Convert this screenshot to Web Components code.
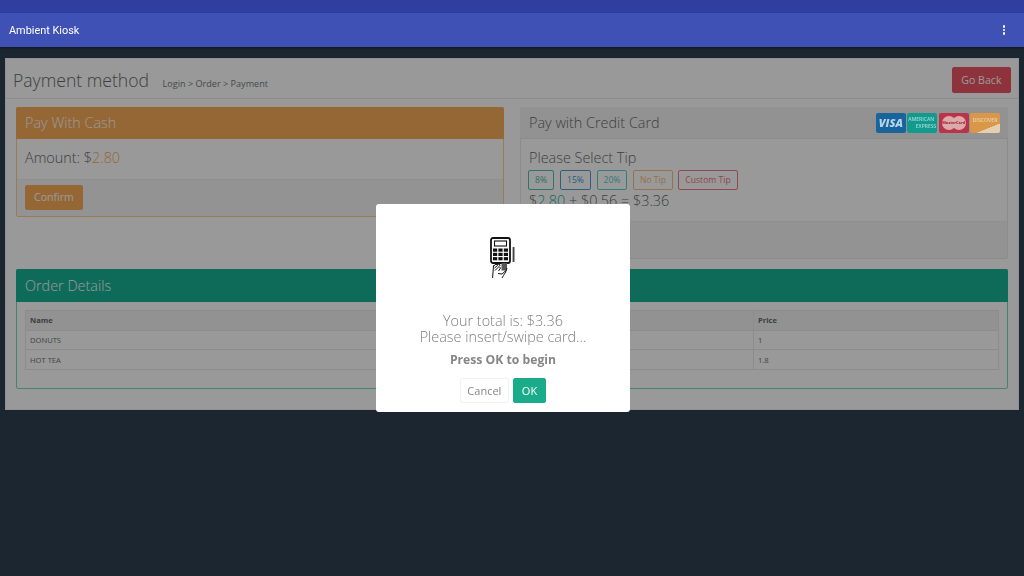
<!DOCTYPE html>
<html><head><meta charset="utf-8"><style>
html,body{margin:0;padding:0;height:100%}
body{width:1024px;height:576px;overflow:hidden;font-family:"Open Sans","Liberation Sans",sans-serif;color:#676a6c;background:#2f4050}
</style></head><body>
<kiosk-app></kiosk-app>
<script>
function def(name, html){
  customElements.define(name, class extends HTMLElement{
    constructor(){super();this.attachShadow({mode:'open'}).innerHTML=html;}
  });
}
def('app-bar',`<style>
:host{display:block;flex:none}
.status{height:13px;background:#303f9f}
.bar{height:34px;background:#3f51b5;display:flex;align-items:center;justify-content:space-between;padding:0 19px 0 9px;color:#fff;font:400 10.9px Roboto,"Open Sans",sans-serif;box-shadow:0 1px 2px rgba(0,0,0,.4);position:relative;z-index:1}
.dots{display:flex;flex-direction:column;gap:1.4px}
i{display:block;width:2.2px;height:2.2px;background:#fff;border-radius:50%}
</style><div class="status"></div><div class="bar"><span><slot></slot></span><div class="dots"><i></i><i></i><i></i></div></div>`);

def('page-head',`<style>
:host{display:flex;align-items:center;justify-content:space-between;height:40px;box-sizing:border-box;padding:2px 7px 0 7px;border-bottom:1px solid #e7eaec}
.l{display:flex;align-items:baseline;gap:13.5px;padding-top:1px}
h2{margin:0;font-weight:300;font-size:17.6px;line-height:24px;color:#676a6c}
small{font-size:9.1px;color:#777a7c}
</style><div class="l"><h2><slot name="title"></slot></h2><small><slot name="crumb"></slot></small></div><slot name="action"></slot>`);

def('ui-btn',`<style>
:host{display:inline-flex;align-items:center;justify-content:center;box-sizing:border-box;border-radius:2px;font-size:var(--fs,10.6px);border:1px solid var(--c);background:var(--c);color:#fff;height:var(--h,25px);padding:0 var(--p,8px)}
:host([plain]){background:#fff;border-color:#f2f2f2;color:#868686}
</style><slot></slot>`);

def('tip-btn',`<style>
:host{display:inline-flex;align-items:center;justify-content:center;box-sizing:border-box;height:20px;border:1px solid color-mix(in srgb,var(--c) 78%,white);color:color-mix(in srgb,var(--c) 82%,white);border-radius:2px;font-size:8.6px;background:#fff}
</style><slot></slot>`);

def('ui-card',`<style>
:host{display:block;box-sizing:border-box;border:1px solid var(--bc,#e7eaec);border-radius:2px;background:#fff}
.h{height:var(--hh,31px);margin:-1px -1px 0;padding:0 9px;display:flex;align-items:center;justify-content:space-between;background:var(--c,#f3f3f4);color:var(--ht,#fff);font-weight:300;font-size:14.4px;border-radius:2px 2px 0 0;border-bottom:1px solid var(--c,#e7eaec)}
:host([plain]) .h{color:#676a6c;padding:0 8px 0 9px;background:#f3f3f4}
.b{padding:var(--bp,9px 8px)}
.f{background:#f5f5f5;border-top:1px solid #efefef;padding:var(--fp,5px 8px);min-height:var(--fh,26px)}
:host([nofoot]) .f{display:none}
</style><div class="h"><span><slot name="head"></slot></span><slot name="tools"></slot></div><div class="b"><slot></slot></div><div class="f"><slot name="foot"></slot></div>`);

def('card-logos',`<style>
:host{display:flex;gap:1.5px;position:relative;z-index:2}
span{display:flex;align-items:center;justify-content:center;width:29.9px;height:20px;border-radius:2px;overflow:hidden;color:#fff;position:relative;line-height:1;text-align:center;white-space:nowrap}
.v{background:#17659c;font:italic 800 11px "Open Sans",sans-serif;color:#b8d4e6}
.a{background:#129a8f;font:400 5px "Open Sans",sans-serif;color:#a5dcd5;flex-direction:column;gap:1.5px}
.a b{font-weight:600;align-self:flex-start;margin-left:1px}.a b+b{align-self:flex-end;margin:0 1px 0 0}
.m{background:#b9344b;font:700 3.8px "Open Sans",sans-serif}
.m::before,.m::after{content:"";position:absolute;top:3px;width:14px;height:14px;border-radius:50%;background:#dcaaaa}
.m::before{left:3px}.m::after{right:3px}
.m b{position:relative;z-index:1;color:#a73040}
.d{background:linear-gradient(158deg,#d9974a 0 70%,#e6cfae 70.5%);font:600 5.2px "Open Sans",sans-serif;color:#ecd3ae;padding-bottom:6px;box-sizing:border-box}
</style><span class="v">VISA</span><span class="a"><b>AMERICAN</b><b>EXPRESS</b></span><span class="m"><b>MasterCard</b></span><span class="d">DISCOVER</span>`);

def('order-table',`<style>
:host{display:block}
table{width:100%;border-collapse:collapse;table-layout:fixed;font-size:7.6px;color:#707375}
td,th{border:1px solid #e9e9e9;height:19.7px;padding:0 4px;text-align:left;box-sizing:border-box}
th{background:#f3f3f4;font-weight:700;color:#676a6c}
</style><table><colgroup><col style="width:364px"><col style="width:364px"><col></colgroup>
<tr><th>Name</th><th></th><th>Price</th></tr>
<tr><td>DONUTS</td><td></td><td>1</td></tr>
<tr><td>HOT TEA</td><td></td><td>1.8</td></tr></table>`);

def('terminal-icon',`<style>:host{display:block;width:26px;height:42px}svg{display:block}</style>
<svg width="26" height="42" viewBox="0 0 26 42" fill="none" stroke="#111">
<rect x="1" y="1" width="19" height="25" rx="2" stroke-width="1.800"/>
<rect x="4.500" y="4" width="12" height="5" stroke-width="1.100"/>
<g fill="#111" stroke="none">
<rect x="3" y="11.500" width="4.200" height="3.200"/><rect x="8.400" y="11.500" width="4.200" height="3.200"/><rect x="13.800" y="11.500" width="4.200" height="3.200"/>
<rect x="3" y="15.800" width="4.200" height="3.200"/><rect x="8.400" y="15.800" width="4.200" height="3.200"/><rect x="13.800" y="15.800" width="4.200" height="3.200"/>
<rect x="3" y="20.100" width="4.200" height="3.200"/><rect x="8.400" y="20.100" width="4.200" height="3.200"/><rect x="13.800" y="20.100" width="4.200" height="3.200"/>
<rect x="22.600" y="10" width="1.900" height="15" fill="#444"/>
<rect x="11.500" y="26" width="5.500" height="7.500" fill="#555"/>
</g>
<path d="M3.500 28.500L2.600 41M17 31c-.8 4-3 6.500-5 10" stroke-width="1"/>
<path d="M3 29.500l3-2.500 1.500 1.500-3 2.500M5 33.500l4-4 1.500 1.500-2 3M6.500 27.500l3-.5.500 2M8 36.500l4 .5 4-3.500" stroke-width="1"/>
</svg>`);

def('pay-modal',`<style>
:host{position:absolute;left:376px;top:204px;width:254px;height:208px;box-sizing:border-box;background:#fff;border-radius:3px;z-index:3;display:flex;flex-direction:column;align-items:center;color:#797979;text-align:center;padding-top:33px}
.msg{margin-top:34px;font-weight:300;font-size:14.4px;line-height:16px;color:#7d7d7d}
.sub{margin-top:6px;font-weight:700;font-size:12.2px;line-height:17px;color:#868686}
.act{display:flex;gap:4px;margin-top:10px}
</style><terminal-icon></terminal-icon><div class="msg"><slot name="msg"></slot></div><div class="sub"><slot name="sub"></slot></div><div class="act"><slot name="act"></slot></div>`);

def('kiosk-app',`<style>
:host{display:flex;flex-direction:column;width:1024px;height:576px;position:relative;overflow:hidden;filter:blur(.35px)}
.web{flex:1;position:relative;padding:11px 5px 0}
.panel{background:#fff;border:1px solid #f2f2f2;box-sizing:border-box;height:352px}
.content{padding:8px 10px 0 10px;display:flex;flex-direction:column}
.cols{display:grid;grid-template-columns:488px 488px;gap:16px;align-items:start}
.amt{font-weight:300;font-size:14.4px;line-height:20px;color:#676a6c}
.o{color:#f8ac59}.g{color:#1ab394}
.title{font-weight:300;font-size:14.4px;line-height:19px}
.tips{display:flex;gap:6px;margin:3px 0 0 -1px}
.tot{font-weight:300;font-size:14.4px;line-height:21px}
.shade{position:absolute;inset:0;background:rgba(0,0,0,.4);z-index:1}
.left{--bp:9px 8px 11px;--fh:25px;--fp:4px 8px 6px;--bc:#ffcb94}
.right{--bp:9px 8px 10px;--fh:26px}
.order{margin-top:10px;--hh:32px;--bp:8px 8px 18px;--bc:#6fdcc5}
</style>
<app-bar>Ambient Kiosk</app-bar>
<div class="web">
 <div class="panel">
  <page-head><span slot="title">Payment method</span><span slot="crumb">Login &gt; Order &gt; Payment</span><ui-btn slot="action" style="--c:#ed5565;--p:8.5px;--h:26px">Go Back</ui-btn></page-head>
  <div class="content">
   <div class="cols">
    <ui-card class="left" style="--c:#f8ac59"><span slot="head">Pay With Cash</span>
      <div class="amt">Amount: $<span class="o">2.80</span></div>
      <ui-btn slot="foot" style="--c:#f8ac59">Confirm</ui-btn></ui-card>
    <ui-card class="right" plain><span slot="head">Pay with Credit Card</span><card-logos slot="tools"></card-logos>
      <div class="title">Please Select Tip</div>
      <div class="tips">
       <tip-btn style="--c:#1ab394;width:26px">8%</tip-btn><tip-btn style="--c:#1c84c6;width:31px">15%</tip-btn><tip-btn style="--c:#23c6c8;width:30px">20%</tip-btn><tip-btn style="--c:#f8ac59;width:40px;margin-right:-1px">No Tip</tip-btn><tip-btn style="--c:#ed5565;width:60px">Custom Tip</tip-btn>
      </div>
      <div class="tot">$<span class="g">2.80</span> + $0.56 = $3.36</div>
    </ui-card>
   </div>
   <ui-card class="order" nofoot style="--c:#1ab394"><span slot="head">Order Details</span><order-table></order-table></ui-card>
  </div>
 </div>
 <div class="shade"></div>
</div>
<pay-modal><span slot="msg">Your total is: $3.36<br>Please insert/swipe card...</span><span slot="sub">Press OK to begin</span>
 <ui-btn slot="act" plain style="--c:#fff;--h:25px;--p:6.5px;--fs:11px">Cancel</ui-btn><ui-btn slot="act" style="--c:#1aab8b;--h:25px;--p:8px;--fs:11px">OK</ui-btn></pay-modal>`);
</script></body></html>
